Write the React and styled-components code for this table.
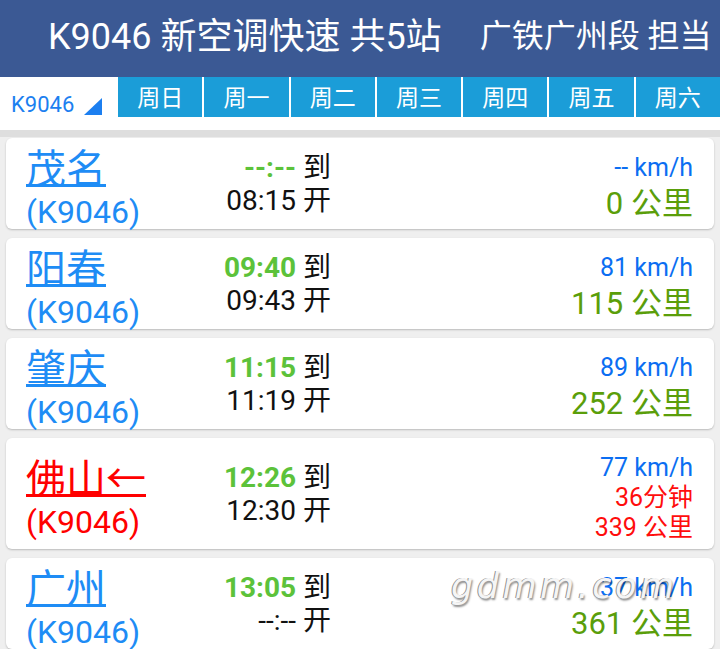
import React from "react";
import styled, { createGlobalStyle } from "styled-components";

const Global = createGlobalStyle`
  html, body { margin: 0; padding: 0; background: #efefef; }
  body { font-family: Roboto, "Noto Sans CJK SC", sans-serif; overflow: hidden; }
`;

const Page = styled.div`
  position: relative;
  width: 720px;
  height: 649px;
  overflow: hidden;
  background: #efefef;
`;

const Header = styled.header`
  height: 77px;
  background: #3b5994;
  color: #fff;
  display: flex;
  align-items: center;
  padding: 0 0 12px 48px;
  box-sizing: border-box;
  white-space: nowrap;
`;

const HeaderPart = styled.span`
  font-size: ${(p) => p.$size}px;
  margin-right: ${(p) => p.$gap || 0}px;
`;

const TabBar = styled.div`
  display: flex;
  height: 53px;
  background: #fff;
  border-bottom: 7px solid #dedede;
  align-items: flex-start;
`;

const TrainPick = styled.div`
  width: 118px;
  height: 40px;
  display: flex;
  align-items: center;
  padding-left: 11px;
  padding-top: 14px;
  box-sizing: border-box;
  color: #1c7ff0;
  font-size: 22px;
  gap: 10px;
`;

const Triangle = styled.span`
  width: 0;
  height: 0;
  margin-top: 5px;
  border-left: 18px solid transparent;
  border-bottom: 17px solid #1c7ff0;
`;

const Tabs = styled.div`
  flex: 1;
  display: grid;
  grid-template-columns: repeat(7, 1fr);
  gap: 2px;
`;

const Tab = styled.div`
  height: 40px;
  background: #1b9dd8;
  color: #fff;
  font-size: 23px;
  display: flex;
  align-items: center;
  justify-content: center;
  padding-bottom: 3px;
  box-sizing: border-box;
  font-family: "Noto Sans CJK SC", sans-serif;
`;

const List = styled.div`
  display: flex;
  flex-direction: column;
  gap: 9px;
  padding: 1px 6px 0;
`;

const Card = styled.div`
  background: #fff;
  border-radius: 6px;
  box-shadow: 0 1px 2px rgba(0, 0, 0, 0.22);
  height: ${(p) => p.$h}px;
  display: grid;
  grid-template-columns: 186px 119px 1fr;
  align-items: center;
  padding: 0 21px 0 20px;
  box-sizing: border-box;
`;

const Left = styled.div`
  align-self: stretch;
  display: flex;
  flex-direction: column;
  justify-content: center;
  padding-top: 6px;
  color: ${(p) => (p.$cur ? "#ff0000" : "#1e8cf5")};
`;

const Name = styled.span`
  font-size: 40px;
  line-height: 44px;
  font-family: "Noto Sans CJK SC", sans-serif;
  text-decoration: underline;
  text-decoration-thickness: 3px;
  text-underline-offset: 1px;
  white-space: nowrap;
  align-self: flex-start;
`;

const Sub = styled.span`
  font-size: 32px;
  line-height: 36px;
  margin-top: 6px;
`;

const Mid = styled.div`
  display: flex;
  flex-direction: column;
  align-items: flex-end;
  font-size: 28px;
  line-height: 33px;
  color: #111;
  white-space: nowrap;
`;

const Arr = styled.span`
  color: #5cc23a;
  font-weight: 700;
`;

const Right = styled.div`
  display: flex;
  flex-direction: column;
  align-items: flex-end;
  padding-top: ${(p) => p.$pt || 6}px;
  white-space: nowrap;
`;

const Speed = styled.span`
  color: #0b6ef2;
  font-size: 25px;
  line-height: ${(p) => p.$lh || 34}px;
`;

const Dist = styled.span`
  color: #5a9e0a;
  font-size: 31px;
  line-height: 38px;
`;

const Red = styled.span`
  color: #ff0d0d;
  font-size: 25px;
  line-height: 30px;
`;

const Watermark = styled.div`
  position: absolute;
  left: 451px;
  top: 566px;
  font-family: "DejaVu Sans", sans-serif;
  font-style: oblique;
  font-size: 35px;
  line-height: 40px;
  letter-spacing: 3.5px;
  color: #f5f5f5;
  text-shadow: -1px 0 0 #8f8f8f, 1px 2px 2px rgba(0, 0, 0, 0.45);
  pointer-events: none;
`;

const stations = [
  { name: "茂名", arr: "--:--", dep: "08:15", speed: "--", dist: "0" },
  { name: "阳春", arr: "09:40", dep: "09:43", speed: "81", dist: "115" },
  { name: "肇庆", arr: "11:15", dep: "11:19", speed: "89", dist: "252" },
  { name: "佛山←", arr: "12:26", dep: "12:30", speed: "77", dist: "339", cur: true, wait: "36分钟" },
  { name: "广州", arr: "13:05", dep: "--:--", speed: "37", dist: "361" },
];

const days = ["周日", "周一", "周二", "周三", "周四", "周五", "周六"];

export default function App() {
  return (
    <Page>
      <Global />
      <Header>
        <HeaderPart $size={36} $gap={38}>K9046 新空调快速 共5站</HeaderPart>
        <HeaderPart $size={32}>广铁广州段 担当</HeaderPart>
      </Header>
      <TabBar>
        <TrainPick>
          K9046
          <Triangle />
        </TrainPick>
        <Tabs>
          {days.map((d) => (
            <Tab key={d}>{d}</Tab>
          ))}
        </Tabs>
      </TabBar>
      <List>
        {stations.map((s) => (
          <Card key={s.name} $h={s.cur ? 111 : 91}>
            <Left $cur={s.cur}>
              <Name>{s.name}</Name>
              <Sub>(K9046)</Sub>
            </Left>
            <Mid>
              <span>
                <Arr>{s.arr}</Arr> 到
              </span>
              <span>{s.dep} 开</span>
            </Mid>
            {s.cur ? (
              <Right $pt={8}>
                <Speed $lh={30}>{s.speed} km/h</Speed>
                <Red>{s.wait}</Red>
                <Red>{s.dist} 公里</Red>
              </Right>
            ) : (
              <Right>
                <Speed>{s.speed} km/h</Speed>
                <Dist>{s.dist} 公里</Dist>
              </Right>
            )}
          </Card>
        ))}
      </List>
      <Watermark>gdmm.com</Watermark>
    </Page>
  );
}
